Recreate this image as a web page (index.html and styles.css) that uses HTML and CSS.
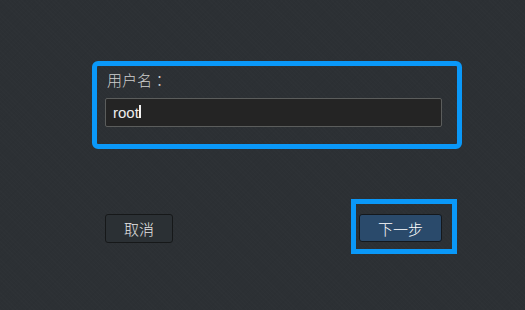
FILE: index.html
```html
<!DOCTYPE html>
<html lang="zh-CN">
<head>
<meta charset="utf-8">
<link rel="stylesheet" href="styles.css">
</head>
<body>
<main class="dialog">
  <section class="field-hl">
    <div class="field-label">用户名<span class="colon" lang="zh-TW">：</span></div>
    <div class="text-input"><span class="value">root</span><span class="caret"></span></div>
  </section>
  <div class="actions">
    <button class="btn btn-cancel">取消</button>
    <div class="next-hl">
      <button class="btn btn-next">下一步</button>
    </div>
  </div>
</main>
</body>
</html>
```
FILE: styles.css
```css
html, body {
  margin: 0;
  padding: 0;
}
body {
  width: 525px;
  height: 310px;
  overflow: hidden;
  background-color: #2c3034;
  background-image:
    repeating-linear-gradient(45deg, rgba(255,255,255,0.008) 0 1px, transparent 1px 3px),
    repeating-linear-gradient(-45deg, rgba(0,0,0,0.02) 0 1px, transparent 1px 4px);
  font-family: "Liberation Sans", "Noto Sans CJK SC", sans-serif;
}
.dialog {
  padding-top: 61px;
  padding-left: 92px;
}
.field-hl {
  box-sizing: border-box;
  width: 370px;
  height: 88px;
  border: 5px solid #0a98f8;
  border-radius: 6px;
  padding: 4px 15px 0 8px;
}
.field-label {
  font-family: "Noto Sans CJK SC", sans-serif;
  font-size: 15px;
  font-weight: 300;
  line-height: 20px;
  height: 20px;
  color: #cfcfcf;
  padding-left: 2px;
}
.colon {
  font-family: "Noto Sans CJK TC", sans-serif;
}
.text-input {
  box-sizing: border-box;
  margin-top: 8px;
  height: 29px;
  background: #242424;
  border: 1px solid #5b5d5c;
  border-radius: 2px;
  display: flex;
  align-items: center;
  padding-left: 7px;
  color: #ededed;
  font-size: 15px;
}
.caret {
  display: inline-block;
  width: 2px;
  height: 13px;
  background: #f2f2f2;
  position: relative;
  top: -1px;
}
.actions {
  margin-top: 65px;
  margin-left: 13px;
  width: 337px;
  display: flex;
  justify-content: space-between;
  align-items: flex-start;
}
.btn {
  box-sizing: border-box;
  font-family: "Noto Sans CJK SC", sans-serif;
  font-size: 15px;
  font-weight: 300;
  line-height: 1;
  padding: 0;
  margin: 0;
  border-radius: 3px;
  display: flex;
  align-items: center;
  justify-content: center;
}
.btn-cancel {
  width: 68px;
  height: 29px;
  background: #2b3034;
  border: 1px solid #161819;
  color: #e6e6e6;
}
.next-hl {
  margin: -15px -15px -12px -8px;
  padding: 10px 10px 7px 3px;
  border: 5px solid #0a98f8;
  display: flex;
}
.btn-next {
  width: 83px;
  height: 28px;
  background: #2a4a6b;
  border: 1px solid #14181c;
  color: #ffffff;
}
```
